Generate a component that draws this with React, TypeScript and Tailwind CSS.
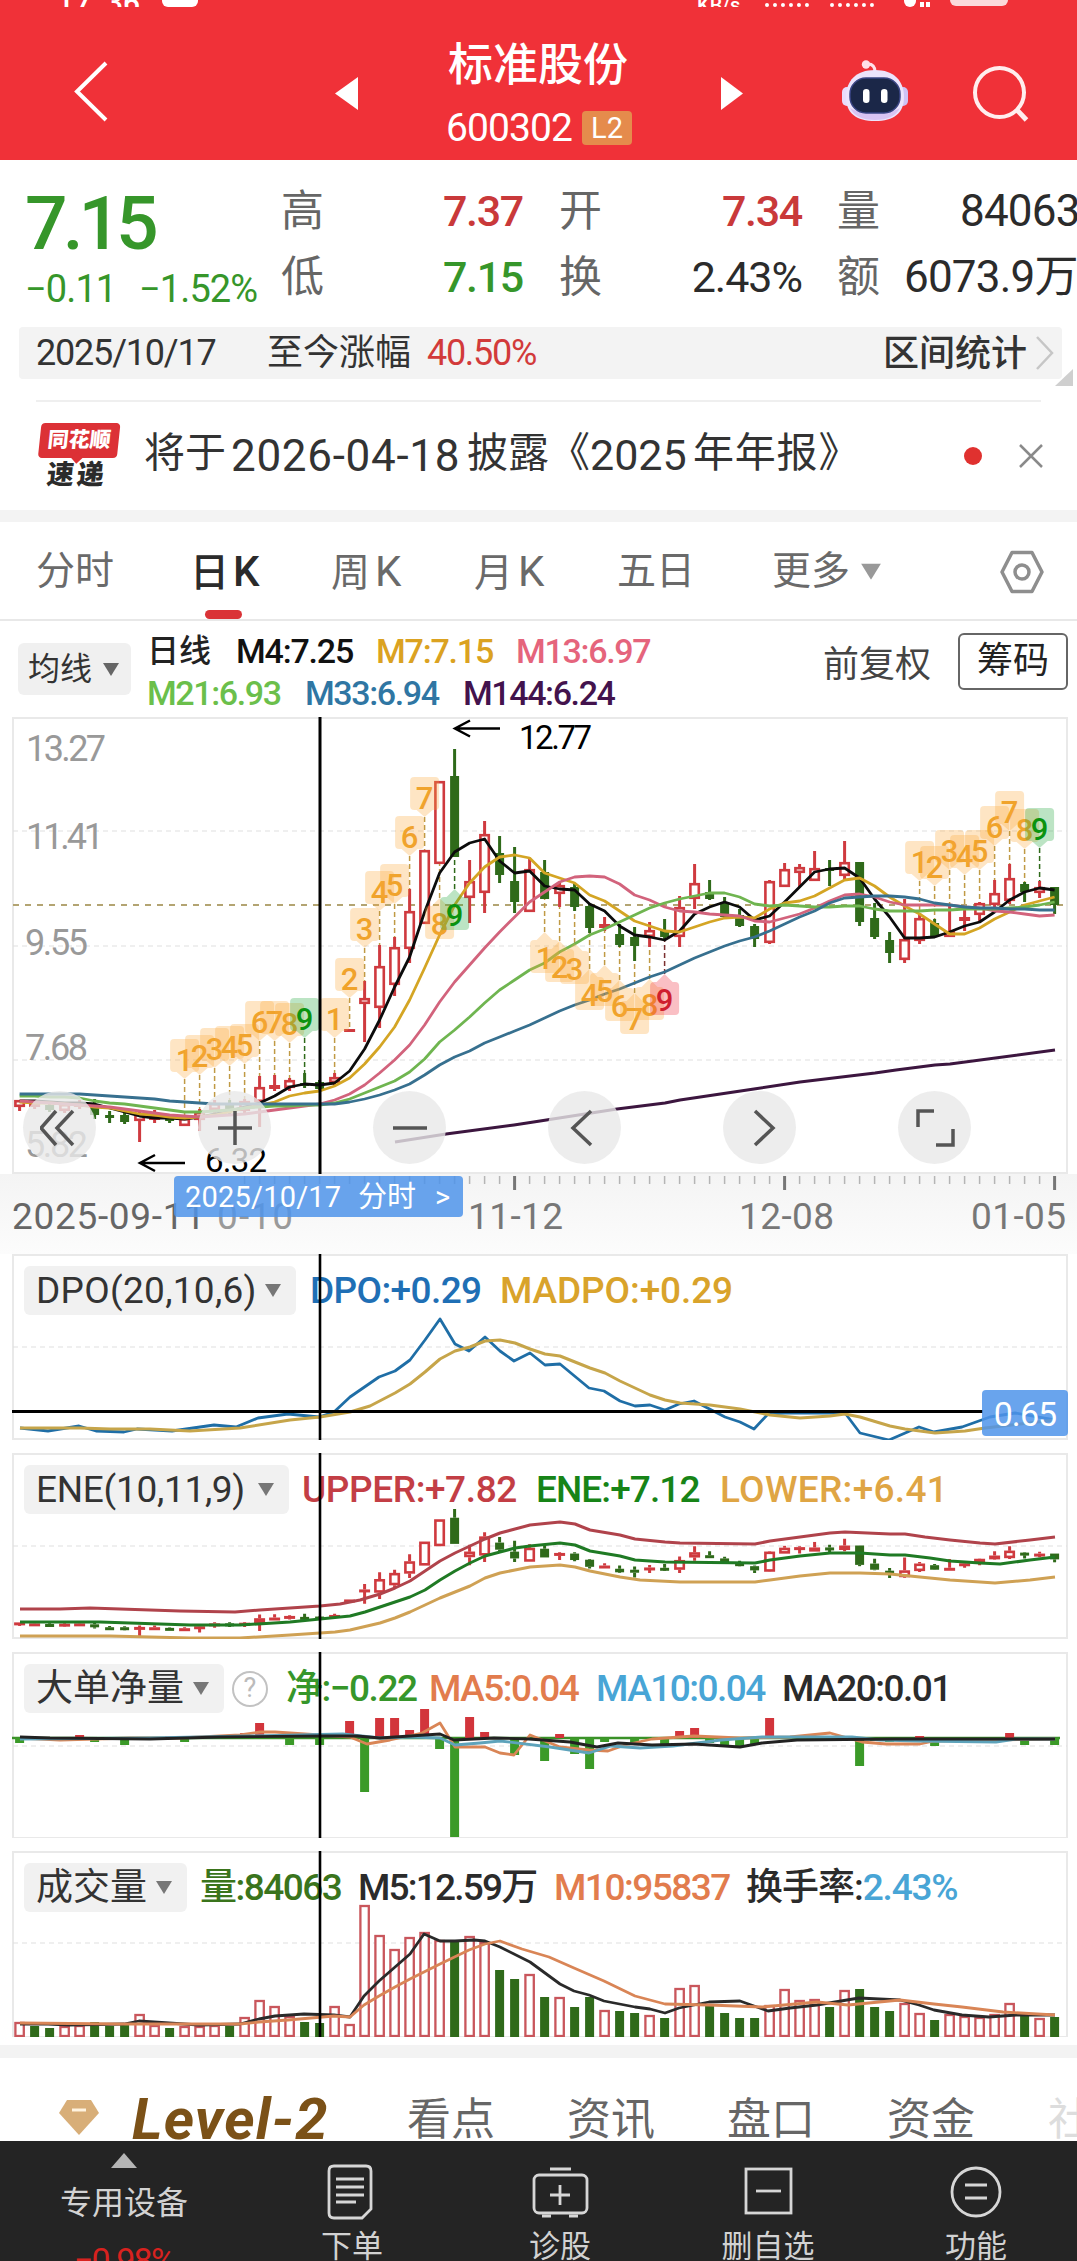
import type { ReactNode } from 'react';

const STEP = 15;
const X0 = 19.6;
const CROSS = 320;
const xAt = (i: number) => X0 + i * STEP;

const RED = '#cf3a3f';
const GREEN = '#2f6a1a';

// [color, high, bodyTop, bodyBottom, low]
type Candle = ['r' | 'g', number, number, number, number];

const candles: Candle[] = [
  ['r', 1100, 1100, 1107, 1111], ['r', 1102, 1103, 1107, 1109], ['g', 1103, 1105, 1110, 1112],
  ['r', 1102, 1104, 1111, 1113], ['r', 1100, 1103, 1107, 1109], ['g', 1099, 1106, 1115, 1119],
  ['g', 1111, 1115, 1118, 1123], ['g', 1112, 1115, 1122, 1124], ['r', 1110, 1114, 1121, 1142],
  ['r', 1110, 1115, 1120, 1123], ['g', 1115, 1117, 1121, 1123], ['r', 1115, 1118, 1126, 1126],
  ['r', 1109, 1112, 1120, 1131], ['r', 1100, 1103, 1110, 1117], ['g', 1100, 1103, 1109, 1114],
  ['r', 1099, 1101, 1111, 1114], ['r', 1076, 1087, 1102, 1127], ['r', 1075, 1085, 1089, 1091],
  ['r', 1078, 1080, 1088, 1091], ['g', 1073, 1083, 1086, 1088], ['g', 1080, 1082, 1089, 1092],
  ['r', 1073, 1077, 1083, 1085], ['r', 1029, 1029, 1032, 1032], ['r', 981, 998, 1004, 1042],
  ['r', 945, 966, 1008, 1028], ['r', 937, 947, 985, 996], ['r', 889, 911, 949, 963],
  ['r', 850, 850, 924, 924], ['r', 781, 781, 864, 864], ['g', 749, 776, 857, 857],
  ['r', 860, 881, 898, 923], ['r', 821, 834, 893, 913], ['g', 836, 853, 875, 883],
  ['g', 847, 881, 902, 913], ['r', 858, 869, 912, 912], ['g', 860, 872, 899, 899],
  ['r', 883, 885, 894, 907], ['g', 883, 887, 907, 911], ['g', 904, 906, 928, 933],
  ['r', 917, 924, 928, 931], ['g', 924, 934, 945, 947], ['g', 927, 937, 946, 961],
  ['r', 922, 930, 937, 947], ['g', 919, 931, 937, 940], ['r', 896, 907, 937, 947],
  ['r', 864, 883, 899, 909], ['g', 880, 892, 899, 900], ['g', 897, 902, 917, 918],
  ['g', 909, 915, 926, 927], ['g', 924, 926, 939, 947], ['r', 880, 881, 943, 944],
  ['r', 863, 869, 887, 887], ['r', 864, 867, 873, 887], ['r', 851, 868, 881, 881],
  ['g', 860, 868, 871, 886], ['r', 841, 862, 876, 880], ['g', 862, 862, 922, 926],
  ['g', 903, 918, 937, 939], ['g', 932, 940, 953, 963], ['r', 899, 939, 960, 963],
  ['r', 913, 918, 941, 944], ['g', 919, 923, 937, 938], ['r', 904, 931, 937, 937],
  ['r', 910, 917, 921, 931], ['r', 902, 903, 915, 923], ['r', 880, 893, 905, 907],
  ['r', 864, 878, 901, 904], ['g', 882, 884, 892, 902], ['r', 881, 887, 893, 898],
  ['g', 887, 887, 905, 914],
];

const ma4 = [
  1101, 1101, 1102, 1103, 1103, 1104, 1108, 1112, 1116, 1118, 1118, 1119, 1117, 1114, 1111, 1107, 1103, 1096, 1087,
  1084, 1085, 1083, 1071, 1049, 1020, 987, 957, 912, 873, 852, 843, 839, 861, 873, 871, 886, 889, 890, 904, 911, 926,
  935, 937, 940, 931, 914, 907, 902, 907, 920, 916, 902, 887, 872, 869, 868, 878, 899, 917, 938, 938, 937, 932, 926,
  922, 912, 900, 892, 888, 890,
];
const ma7 = [
  1102, 1103, 1103, 1104, 1105, 1107, 1108, 1111, 1114, 1115, 1117, 1118, 1117, 1115, 1112, 1108, 1105, 1102, 1096,
  1093, 1091, 1086, 1078, 1064, 1047, 1027, 1000, 968, 935, 905, 883, 867, 857, 855, 858, 873, 878, 883, 895, 901, 911,
  921, 926, 931, 932, 927, 922, 918, 917, 918, 909, 903, 901, 896, 888, 880, 878, 886, 897, 906, 914, 924, 934, 934,
  928, 919, 912, 905, 901, 897,
];
const ma13 = [
  1101, 1102, 1103, 1104, 1105, 1106, 1107, 1109, 1111, 1113, 1115, 1116, 1117, 1116, 1115, 1114, 1112, 1110, 1108,
  1106, 1104, 1100, 1094, 1085, 1073, 1060, 1045, 1025, 1002, 982, 965, 948, 932, 917, 902, 892, 882, 877, 876, 877,
  884, 895, 900, 907, 911, 912, 914, 915, 916, 921, 922, 918, 914, 908, 901, 895, 894, 897, 902, 905, 905, 905, 905,
  907, 908, 911, 912, 914, 916, 915,
];
const ma21 = [
  1096, 1096, 1097, 1097, 1098, 1101, 1103, 1104, 1106, 1108, 1110, 1112, 1112, 1111, 1110, 1108, 1107, 1106, 1106,
  1105, 1105, 1103, 1099, 1093, 1087, 1081, 1072, 1059, 1042, 1030, 1017, 1003, 990, 980, 970, 963, 952, 944, 935, 929,
  922, 915, 908, 903, 899, 896, 893, 893, 897, 904, 906, 905, 906, 907, 907, 906, 906, 909, 911, 911, 911, 910, 910,
  909, 909, 909, 908, 907, 905, 902,
];
const ma33 = [
  1094, 1094, 1094, 1094, 1094, 1095, 1096, 1097, 1098, 1099, 1101, 1102, 1103, 1104, 1104, 1104, 1104, 1104, 1104,
  1104, 1104, 1104, 1102, 1099, 1095, 1090, 1084, 1075, 1065, 1057, 1051, 1043, 1037, 1031, 1025, 1018, 1011, 1005,
  1000, 994, 989, 983, 977, 972, 965, 958, 952, 946, 941, 937, 931, 924, 917, 911, 903, 898, 897, 896, 896, 897, 899,
  903, 905, 907, 908, 908, 909, 909, 910, 910,
];

// [index, tip, label, kind, above]
type Tag = [number, number, number, 'o' | 'g' | 'r', boolean];
const tags: Tag[] = [
  [11, 1079, 1, 'o', true], [12, 1075, 2, 'o', true], [13, 1068, 3, 'o', true], [14, 1066, 4, 'o', true],
  [15, 1064, 5, 'o', true], [16, 1041, 6, 'o', true], [17, 1041, 7, 'o', true], [18, 1043, 8, 'o', true],
  [19, 1038, 9, 'g', true], [21, 1038, 1, 'o', true], [22, 998, 2, 'o', true], [23, 948, 3, 'o', true],
  [24, 911, 4, 'o', true], [25, 904, 5, 'o', true], [26, 856, 6, 'o', true], [27, 817, 7, 'o', true],
  [28, 898, 8, 'o', false], [29, 889, 9, 'g', false], [35, 932, 1, 'o', false], [36, 941, 2, 'o', false],
  [37, 943, 3, 'o', false], [38, 969, 4, 'o', false], [39, 965, 5, 'o', false], [40, 980, 6, 'o', false],
  [41, 993, 7, 'o', false], [42, 979, 8, 'o', false], [43, 974, 9, 'r', false], [60, 881, 1, 'o', true],
  [61, 886, 2, 'o', true], [62, 870, 3, 'o', true], [63, 875, 4, 'o', true], [64, 870, 5, 'o', true],
  [65, 846, 6, 'o', true], [66, 831, 7, 'o', true], [67, 849, 8, 'o', true], [68, 848, 9, 'g', true],
];
const tagFill = { o: '#fba93a', g: '#22a63a', r: '#ee2b3c' };
const tagText = { o: '#f0a32c', g: '#0b930f', r: '#cf1f2e' };

const netFlow: Record<number, number> = {
  0: -5, 4: 3, 5: -4, 7: -7, 10: 2, 11: -4, 15: 5, 16: 15, 18: -7, 20: -7, 22: 17, 23: -54, 24: 20, 25: 20, 26: 8,
  27: 29, 28: -11, 29: -99, 30: 21, 31: 6, 33: -17, 35: -23, 36: 4, 37: -16, 38: -31, 39: -4, 41: -5, 43: -9, 44: 7,
  45: 10, 46: -5, 47: -7, 48: -9, 49: -6, 50: 20, 56: -28, 57: -3, 58: -4, 60: 2, 61: -8, 66: 5, 67: -7, 69: -7,
};

const volume =
  '13r 11g 9g 9r 10r 15g 11g 13g 21r 10r 9g 9r 9r 10r 11g 18r 35r 29r 19r 15g 14g 29r 11r 130r 100r 86r 98r 103r 95r 97g 99r 93r 67g 58g 61r 40g 38r 30g 40g 25r 26g 24g 20r 19g 47r 50r 32g 24g 19g 19g 30r 46r 35r 36r 30g 45r 48g 30g 26g 32r 22r 17g 21r 19r 18r 21r 32r 21g 17r 20g'
    .split(' ')
    .map((s) => ({ h: parseInt(s), up: s.endsWith('r') }));

const seriesPath = (ys: number[]) => ys.map((y, i) => `${xAt(i).toFixed(1)},${y}`).join(' ');

const Line = ({ pts, color, w = 2.8 }: { pts: string; color: string; w?: number }) => (
  <polyline points={pts} fill="none" stroke={color} strokeWidth={w} strokeLinejoin="round" />
);

const Candles = ({ map = (y: number) => y }: { map?: (y: number) => number }) => (
  <g>
    {candles.map(([c, hi, top, bot, lo], i) => {
      const x = xAt(i);
      const [h, t, b, l] = [hi, top, bot, lo].map(map);
      const color = c === 'r' ? RED : GREEN;
      const hollow = c === 'r' && b - t > 5;
      return (
        <g key={i} stroke={color}>
          <path d={`M${x} ${h}V${t}M${x} ${b}V${l}`} strokeWidth={3} fill="none" />
          {hollow ? (
            <rect x={x - 4.2} y={t + 1.2} width={8.4} height={b - t - 2.4} fill="#fff" strokeWidth={2.6} />
          ) : (
            <rect x={x - (c === 'r' ? 5.5 : 4.5)} y={t} width={c === 'r' ? 11 : 9} height={Math.max(b - t, 3)} fill={color} stroke="none" />
          )}
        </g>
      );
    })}
  </g>
);

const Frame = ({ top, bottom, grid = [] }: { top: number; bottom: number; grid?: number[] }) => (
  <g fill="none">
    <rect x={13} y={top + 1} width={1054} height={bottom - top - 2} stroke="#e9e9e9" strokeWidth={2} />
    {grid.map((y) => (
      <path key={y} d={`M13 ${y}H1067`} stroke="#dfdfdf" strokeWidth={1.2} strokeDasharray="5 4" />
    ))}
  </g>
);

const Caret = ({ className = '' }: { className?: string }) => (
  <svg className={`shrink-0 ${className}`} width="18" height="13" viewBox="0 0 18 13">
    <path d="M1 0h16L9 13z" fill="currentColor" />
  </svg>
);

const Header = () => (
  <header className="h-[160px] bg-[#f03138] text-white overflow-hidden">
    <div className="h-[7px] overflow-hidden flex items-end pl-[57px] text-[30px] leading-[8px] font-medium">
      <span className="w-[105px] shrink-0">17&nbsp; 36</span>
      <span className="w-9 h-[7px] rounded-b-md bg-white"></span>
      <span className="ml-[499px] w-[68px] text-[20px] leading-[4px]">KB/s</span>
      <span className="w-[44px] border-b-4 border-dotted border-white"></span>
      <span className="ml-[21px] w-[44px] border-b-4 border-dotted border-white"></span>
      <span className="ml-[30px] w-[12px] h-[7px] rounded-b-full bg-white"></span>
      <span className="ml-[4px] w-[10px] h-[5px] border-x-4 border-white"></span>
      <span className="ml-[20px] w-[58px] h-[6px] mb-px rounded-b-md bg-[#fbd9da]"></span>
    </div>
    <div className="flex items-start pl-[72px] pt-[30px]">
      <svg width="40" height="92" viewBox="72 37 40 92" className="shrink-0">
        <path d="M106 63 77 91.500 106 120" fill="none" stroke="#fff" strokeWidth="4" />
      </svg>
      <svg width="26" height="92" viewBox="334 37 26 92" className="ml-[222px] shrink-0">
        <path d="M358 77v33L335 93.500z" fill="#fff" />
      </svg>
      <div className="ml-[78px] w-[206px] flex flex-col">
        <div className="pl-[10px] h-[58px] text-[45px] leading-[58px] font-medium whitespace-nowrap">标准股份</div>
        <div className="flex items-center h-9 pl-[8px] mt-[15px]">
          <span className="text-[39px] leading-9 tracking-[-0.900px] w-[136px]">600302</span>
          <span className="w-[50px] h-[34px] rounded bg-[#e58b4c] text-[29px] leading-[35px] text-center">L2</span>
        </div>
      </div>
      <svg width="26" height="92" viewBox="719 37 26 92" className="ml-[75px] shrink-0">
        <path d="M721 77v33l22-16.500z" fill="#fff" />
      </svg>
      <svg width="72" height="92" viewBox="839 37 72 92" className="ml-[94px] shrink-0">
        <path d="M875 72c0-6-3-8-7-8" fill="none" stroke="#ffdfe8" strokeWidth="3" />
        <circle cx="866" cy="64.500" r="4.200" fill="#ffdfe8" />
        <rect x="842" y="87" width="10" height="19" rx="5" fill="#e9dcfb" />
        <rect x="898" y="87" width="10" height="19" rx="5" fill="#cfc3f5" />
        <path d="M875 70c19 0 29 11 29 27s-10 24-29 24-29-8-29-24 10-27 29-27z" fill="#ece4fc" />
        <path d="M850 108c4 8 12 12 25 12s21-4 25-12c-8 6-42 6-50 0z" fill="#d9c4f3" />
        <rect x="850" y="78" width="50" height="35" rx="16" fill="#1b2748" stroke="#3a4584" strokeWidth="1.500" />
        <rect x="863" y="89" width="6.500" height="14" rx="3.200" fill="#fff" />
        <rect x="881" y="89" width="6.500" height="14" rx="3.200" fill="#fff" />
      </svg>
      <svg width="62" height="92" viewBox="970 37 62 92" className="ml-[59px] shrink-0">
        <circle cx="999.500" cy="92.500" r="24.500" fill="none" stroke="#ffeeee" strokeWidth="4" />
        <path d="M1016 109l10.500 11" stroke="#ffeeee" strokeWidth="5" />
      </svg>
    </div>
  </header>
);

const Stat = ({ label, value, className }: { label: string; value: string; className: string }) => (
  <div className="flex justify-between">
    <span className="text-[#666]">{label}</span>
    <span className={className}>{value}</span>
  </div>
);

const Quote = () => (
  <section className="h-[167px] flex overflow-hidden text-[43px] leading-[66px] whitespace-nowrap">
    <div className="w-[281px] shrink-0 text-[#36962a] pl-[25px] pt-[22px]">
      <div className="text-[75px] leading-[82px] font-medium tracking-[-5px]">7.15</div>
      <div className="text-[38px] leading-[50px] flex tracking-[-0.900px]">
        <span className="w-[114px]">−0.11</span>
        <span>−1.52%</span>
      </div>
    </div>
    <div className="w-[242px] shrink-0 pt-[18px]">
      <Stat label="高" value="7.37" className="text-[#c9393a] font-medium tracking-[-1.300px]" />
      <Stat label="低" value="7.15" className="text-[#36962a] font-medium tracking-[-1.300px]" />
    </div>
    <div className="w-[243px] ml-[36px] shrink-0 pt-[18px]">
      <Stat label="开" value="7.34" className="text-[#c9393a] font-medium tracking-[-1.300px]" />
      <Stat label="换" value="2.43%" className="text-[#2b2b2b] tracking-[-1px]" />
    </div>
    <div className="w-[242px] ml-[35px] shrink-0 pt-[18px] text-[#2b2b2b]">
      <div className="flex">
        <span className="text-[#666]">量</span>
        <span className="ml-[80px] text-[44px] tracking-[-0.800px]">84063</span>
      </div>
      <div className="flex">
        <span className="text-[#666]">额</span>
        <span className="ml-[24px] text-[44px] tracking-[-0.800px]">6073.9万</span>
      </div>
    </div>
  </section>
);

const RangeBar = () => (
  <div className="h-[73px] relative">
    <div className="ml-[19px] w-[1043px] h-[52px] rounded bg-[#f3f3f3] flex items-center pl-[17px] text-[36px] text-[#333] whitespace-nowrap">
      <span className="w-[231px] tracking-[-1.200px]">2025/10/17</span>
      <span className="w-[160px]">至今涨幅</span>
      <span className="text-[#d23a3a] tracking-[-1.300px]">40.50%</span>
      <span className="ml-auto pt-px font-medium">区间统计</span>
      <svg className="ml-[8px] mr-[7px]" width="20" height="36" viewBox="0 0 20 36">
        <path d="M2 2 17 18 2 34" fill="none" stroke="#c6c6c6" strokeWidth="2.500" />
      </svg>
    </div>
    <svg className="absolute right-[4px] top-[42px]" width="18" height="17" viewBox="0 0 18 17">
      <path d="M18 0v17H0z" fill="#cfcfcf" />
    </svg>
  </div>
);

const Notice = () => (
  <div className="h-[110px] mx-[36px] border-t-2 border-[#efefef] flex items-center whitespace-nowrap">
    <div className="w-[83px] shrink-0 flex flex-col items-center -skew-x-6">
      <div className="w-[79px] h-[35px] rounded bg-[#dc3136] text-white text-[21px] leading-[34px] font-black text-center relative">
        同花顺
        <span className="absolute left-[35px] top-[31px] size-2 rotate-45 bg-[#dc3136]"></span>
      </div>
      <div className="text-[27px] leading-[30px] mt-[2px] pl-[3px] font-black tracking-[3px] text-[#2b2b2b]">速递</div>
    </div>
    <div className="ml-[25px] text-[41px] text-[#333] flex">
      <span className="w-[87px]">将于</span>
      <span className="w-[236px] text-[44px] tracking-[0.700px]">2026-04-18</span>
      <span className="w-[82px]">披露</span>
      <span className="w-[41px]">《</span>
      <span className="w-[103px] text-[43px]">2025</span>
      <span className="tracking-[0.800px]">年年报》</span>
    </div>
    <span className="ml-auto size-[18px] rounded-full bg-[#e0312f]"></span>
    <svg className="ml-[37px] -mr-[2px]" width="24" height="24" viewBox="0 0 24 24">
      <path d="M1 1 23 23M23 1 1 23" stroke="#8a8a8a" strokeWidth="2.500" />
    </svg>
  </div>
);

const Tabs = () => (
  <nav className="h-[99px] border-b-2 border-[#e8e8e8] flex items-center pl-[36px] pt-[2px] text-[39px] text-[#6a6a6a] whitespace-nowrap">
    <span className="w-[154px]">分时</span>
    <span className="w-[141px] text-[#2b2b2b] font-medium relative">
      日<span className="ml-[4px] text-[42px]">K</span>
      <span className="absolute left-[15px] top-[70px] w-[37px] h-[9px] rounded-full bg-[#da3337]"></span>
    </span>
    <span className="w-[143px]">周<span className="ml-[5px] text-[42px]">K</span></span>
    <span className="w-[143px]">月<span className="ml-[5px] text-[42px]">K</span></span>
    <span className="w-[155px]">五日</span>
    <span className="w-[90px]">更多</span>
    <Caret className="text-[#999] scale-125" />
    <svg className="ml-[120px]" width="44" height="44" viewBox="0 0 44 44" fill="none" stroke="#8e8e8e" strokeWidth="3.500" strokeLinejoin="round">
      <path d="M12 2.500h20L42 22 32 41.500H12L2 22z" />
      <circle cx="22" cy="22" r="7" />
    </svg>
  </nav>
);

const MaLegend = () => (
  <div className="h-[96px] flex pl-[18px] text-[34px] whitespace-nowrap overflow-hidden">
    <div className="mt-[22px] w-[113px] h-[52px] rounded-md bg-[#f0f0f0] flex items-center pl-[10px] text-[32px] text-[#333]">
      均线<Caret className="ml-[10px] text-[#666]" />
    </div>
    <div className="ml-[16px] w-[676px] pt-[10px] font-medium">
      <div className="flex h-[41px] leading-[41px]">
        <span className="w-[89px] text-[32px] text-[#222]">日线</span>
        <span className="w-[140px] tracking-[-1.200px] text-[#111]">M4:7.25</span>
        <span className="w-[140px] tracking-[-1.200px] text-[#dba221]">M7:7.15</span>
        <span className="tracking-[-1.300px] text-[#e5647c]">M13:6.97</span>
      </div>
      <div className="flex h-[41px] leading-[43px] tracking-[-1.400px]">
        <span className="w-[158px] text-[#6bbf4b]">M21:6.93</span>
        <span className="w-[158px] text-[#2f76a3]">M33:6.94</span>
        <span className="text-[#43134d]">M144:6.24</span>
      </div>
    </div>
    <span className="mt-[24px] leading-[40px] text-[36px] text-[#444]">前复权</span>
    <span className="ml-[27px] mt-[12px] w-[110px] h-[57px] border-2 border-[#666] rounded-md text-[36px] leading-[53px] text-center text-[#222]">
      筹码
    </span>
  </div>
);

const RoundButton = ({ children }: { children: ReactNode }) => (
  <span className="size-[73px] shrink-0 rounded-full bg-[#e8e8e8]/80 flex items-center justify-center">
    <svg width="40" height="40" viewBox="-20 -20 40 40" fill="none" stroke="#555" strokeWidth="3.500">
      {children}
    </svg>
  </span>
);

const KChart = () => (
  <div className="h-[457px] relative">
    <svg className="block" width="1077" height="457" viewBox="0 717 1077 457">
      <Frame top={717} bottom={1174} grid={[831, 946, 1060]} />
      <path d="M13 905H1067" stroke="#b3a472" strokeWidth="1.800" strokeDasharray="6 6" />
      <g fill="#999" fontSize="36">
        <text x="26" y="761" textLength="80">13.27</text>
        <text x="26" y="849" textLength="78">11.41</text>
        <text x="25" y="955" textLength="63">9.55</text>
        <text x="25" y="1060" textLength="63">7.68</text>
        <text x="25" y="1157" textLength="63">5.82</text>
      </g>
      {tags.map(([i, tip, , kind, above]) => (
        <path
          key={i}
          d={`M${xAt(i)} ${tip}V${above ? candles[i][1] : candles[i][4]}`}
          stroke={kind === 'o' ? '#c09a45' : kind === 'g' ? '#2f6a1a' : '#7b3030'}
          strokeWidth="1.500"
          strokeDasharray="5 3"
        />
      ))}
      <Candles />
      <Line pts={seriesPath(ma4)} color="#0c0c0c" />
      <Line pts={seriesPath(ma7)} color="#d4a524" />
      <Line pts={seriesPath(ma13)} color="#d2637c" />
      <Line pts={seriesPath(ma21)} color="#6fb550" />
      <Line pts={seriesPath(ma33)} color="#37708f" />
      <Line
        pts="395,1142 446,1134 514,1125 540,1121 617,1109 665,1103 680,1100 754,1089 800,1082 875,1073 896,1070 935,1065 950,1064 1055,1050"
        color="#3c163f"
        w={3}
      />
      {tags.map(([i, tip, label, kind, above]) => {
        const x = xAt(i);
        const top = above ? tip - 40 : tip + 8;
        return (
          <g key={i}>
            <path
              d={
                above
                  ? `M${x - 10.5} ${top}h21a4 4 0 0 1 4 4v25a4 4 0 0 1-4 4h-2.500l-8 7-8-7h-2.500a4 4 0 0 1-4-4v-25a4 4 0 0 1 4-4z`
                  : `M${x - 10.5} ${top}h2.500l8-8 8 8h2.500a4 4 0 0 1 4 4v25a4 4 0 0 1-4 4h-21a4 4 0 0 1-4-4v-25a4 4 0 0 1 4-4z`
              }
              fill={tagFill[kind]}
              fillOpacity="0.300"
            />
            <text x={x} y={above ? tip - 8 : tip + 37} textAnchor="middle" fontSize="31" fontWeight="500" fill={tagText[kind]}>
              {label}
            </text>
          </g>
        );
      })}
      <g fill="none" stroke="#000" strokeWidth="2.500">
        <path d="M500 728.500H455M470 720.500l-15 8 15 8" />
        <path d="M185 1163H140M155 1155l-15 8 15 8" />
      </g>
      <g fill="#000" fontSize="33">
        <text x="519" y="749" textLength="73">12.77</text>
        <text x="205" y="1172" textLength="62">6.32</text>
      </g>
      <path d={`M${CROSS} 717V1174`} stroke="#000" strokeWidth="3" />
    </svg>
    <div className="absolute left-[23px] top-[374px] flex gap-[102px]">
      <RoundButton><path d="M-4 -17-19 0-4 17M13 -17-3 0 13 17" /></RoundButton>
      <RoundButton><path d="M-17 0h34M0 -17v34" /></RoundButton>
      <RoundButton><path d="M-17 0h34" /></RoundButton>
      <RoundButton><path d="M6 -17-12 0 6 17" /></RoundButton>
      <RoundButton><path d="M-5 -17 13 0-5 17" /></RoundButton>
      <RoundButton><path d="M-17 -1v-16h16M1 17h17v-16" /></RoundButton>
    </div>
  </div>
);

const TimeAxis = () => (
  <div className="h-[80px] relative bg-gradient-to-b from-[#f4f4f4] to-[#fcfcfc]">
    <svg className="block" width="1077" height="80" viewBox="0 1174 1077 80">
      {Array.from({ length: 55 }).map((_, k) => {
        const i = k + 15;
        const major = i === 33 || i === 51 || i === 69;
        return (
          <path key={i} d={`M${xAt(i)} 1176V${major ? 1190 : 1184}`} stroke={major ? '#777' : '#b5b5b5'} strokeWidth={major ? 3 : 1.5} />
        );
      })}
      <g fill="#777" fontSize="37">
        <text x="12" y="1229" textLength="193" fill="#666">2025-09-11</text>
        <text x="217" y="1229" textLength="76" fill="#9a9a9a">0-10</text>
        <text x="468" y="1229" textLength="95">11-12</text>
        <text x="739" y="1229" textLength="95">12-08</text>
        <text x="971" y="1229" textLength="95">01-05</text>
      </g>
    </svg>
    <div className="absolute left-[174px] top-[2px] w-[289px] h-[41px] rounded-sm bg-[#4f94ea]/85 text-white text-[29px] leading-[43px] flex pl-[11px] whitespace-nowrap">
      <span className="w-[173px] tracking-[0.200px]">2025/10/17</span>
      <span className="w-[77px]">分时</span>
      <span>&gt;</span>
    </div>
  </div>
);

type PanelProps = {
  top: number;
  bottom: number;
  grid: number;
  title: string;
  titleClass: string;
  legend: ReactNode;
  children: ReactNode;
  help?: boolean;
};

const Panel = ({ top, bottom, grid, title, titleClass, legend, children, help }: PanelProps) => (
  <div className="h-[185px] mb-[14px] relative">
    <svg className="block" width="1077" height="186" viewBox={`0 ${top} 1077 186`}>
      <Frame top={top} bottom={bottom} grid={[grid]} />
      {children}
    </svg>
    <div className="absolute left-[24px] top-[12px] h-[49px] flex items-center text-[37px] leading-[49px] whitespace-nowrap">
      <div className={`h-[49px] rounded-md bg-[#f1f1f1] text-[#333] flex items-center justify-between pl-[12px] pr-[14px] ${titleClass}`}>
        <span>{title}</span>
        <Caret className="text-[#777]" />
      </div>
      {help && (
        <span className="ml-[8px] size-[36px] rounded-full border-[2.5px] border-[#c2c2c2] text-[#bbb] text-[27px] leading-[31px] text-center">?</span>
      )}
      {legend}
    </div>
    <svg className="absolute left-0 top-0" width="1077" height="186" viewBox={`0 ${top} 1077 186`}>
      <path d={`M${CROSS} ${top}V${bottom}`} stroke="#000" strokeWidth="2.600" />
    </svg>
  </div>
);

const DpoPanel = () => (
  <div className="relative">
    <Panel
      top={1254}
      bottom={1440}
      grid={1347}
      title="DPO(20,10,6)"
      titleClass="w-[272px] tracking-[0.300px]"
      legend={
        <div className="ml-[14px] flex font-medium">
          <span className="w-[190px] text-[#1f6fb5] tracking-[-0.600px]">DPO:+0.29</span>
          <span className="text-[#d9a32b] tracking-[-0.100px]">MADPO:+0.29</span>
        </div>
      }
    >
      <Line
        color="#1f6ea6"
        pts="20,1428 48,1431 79,1426 96,1431 124,1432 137,1429 172,1431 214,1425 236,1427 258,1418 288,1414 319,1417 334,1412 350,1397 379,1377 395,1371 410,1360 425,1340 440,1319 455,1344 469,1351 485,1337 500,1351 514,1361 530,1353 545,1365 560,1364 589,1388 604,1391 620,1401 635,1406 650,1405 665,1410 679,1404 694,1401 725,1417 740,1422 754,1429 768,1414 785,1413 845,1413 860,1433 889,1440 919,1427 934,1432 962,1427 990,1417 1015,1413 1055,1420"
      />
      <Line
        color="#c6a54a"
        w={3}
        pts="20,1428 80,1428 110,1429 150,1429 190,1431 240,1428 290,1420 320,1417 350,1412 370,1406 395,1393 410,1384 425,1372 440,1359 455,1351 470,1347 485,1341 500,1340 515,1343 530,1349 545,1354 560,1356 575,1362 590,1368 605,1373 620,1381 650,1395 665,1400 680,1403 710,1405 740,1409 770,1415 800,1418 830,1416 845,1414 860,1417 890,1426 905,1429 935,1433 965,1431 985,1428 1055,1420"
      />
      <path d="M12 1411.500H983" stroke="#000" strokeWidth="3" />
    </Panel>
    <div className="absolute left-[982px] top-[136px] w-[86px] h-[46px] rounded-sm bg-[#4f94ea]/85 text-white text-[34px] leading-[49px] text-center tracking-[-0.900px]">
      0.65
    </div>
  </div>
);

const enePts = '20,1609 60,1609 90,1608 120,1609 180,1611 235,1612 260,1610 290,1608 320,1606 340,1604 360,1600 380,1594 395,1588 410,1581 425,1571 440,1561 455,1553 470,1546 485,1539 500,1533 515,1529 530,1525 560,1522 575,1524 590,1530 620,1535 635,1539 665,1542 680,1543 755,1544 770,1541 800,1537 830,1533 845,1532 890,1534 905,1534 925,1537 950,1540 980,1543 995,1544 1030,1540 1055,1537';
const eneMid = '20,1622 100,1622 190,1625 240,1625 290,1622 320,1619 350,1616 365,1612 380,1607 395,1602 410,1597 425,1590 440,1580 455,1571 470,1563 485,1556 500,1552 515,1548 530,1546 560,1543 575,1545 590,1551 620,1556 635,1560 665,1562 755,1563 770,1560 800,1556 830,1553 860,1553 890,1555 905,1555 930,1558 950,1561 980,1563 1000,1564 1030,1560 1055,1557';
const eneLow = '20,1636 110,1636 190,1638 240,1638 290,1635 335,1632 350,1630 380,1623 395,1618 410,1612 425,1605 440,1598 455,1592 470,1586 485,1578 500,1573 515,1570 530,1567 560,1565 575,1567 590,1571 620,1577 640,1580 680,1582 755,1582 770,1580 800,1576 830,1573 860,1573 890,1574 920,1577 950,1580 995,1583 1030,1580 1055,1577';

const EnePanel = () => (
  <Panel
    top={1453}
    bottom={1639}
    grid={1546}
    title="ENE(10,11,9)"
    titleClass="w-[265px] tracking-[-0.300px]"
    legend={
      <div className="ml-[13px] flex font-medium">
        <span className="w-[234px] text-[#c33e45] tracking-[-0.400px]">UPPER:+7.82</span>
        <span className="w-[184px] text-[#178417] tracking-[-0.900px]">ENE:+7.12</span>
        <span className="text-[#dfa544] tracking-[0.300px]">LOWER:+6.41</span>
      </div>
    }
  >
    <Candles map={(y) => 1509 + (y - 749) * 0.323} />
    <Line pts={enePts} color="#b0434b" w={3} />
    <Line pts={eneMid} color="#1f7a24" w={3} />
    <Line pts={eneLow} color="#cfa154" w={3} />
  </Panel>
);

const NetFlowPanel = () => (
  <Panel
    top={1652}
    bottom={1839}
    grid={1746}
    title="大单净量"
    titleClass="w-[200px]"
    help
    legend={
      <div className="ml-[18px] flex font-medium tracking-[-1.500px]">
        <span className="w-[143px] text-[#36962a]">净:−0.22</span>
        <span className="w-[167px] text-[#e27c4d]">MA5:0.04</span>
        <span className="w-[186px] text-[#48a5d6]">MA10:0.04</span>
        <span className="text-[#2b2b2b]">MA20:0.01</span>
      </div>
    }
  >
    <path d="M12 1738H1060" stroke="#3a9128" strokeWidth="2.500" />
    {Object.entries(netFlow).map(([k, v]) => (
      <rect
        key={k}
        x={xAt(Number(k)) - 4.5}
        y={v > 0 ? 1738 - v : 1738}
        width="9"
        height={Math.abs(v)}
        fill={v > 0 ? '#d2353b' : '#3b9a28'}
      />
    ))}
    <Line
      color="#d98556"
      pts="20,1738 60,1740 130,1738 180,1738 240,1735 260,1732 275,1732 305,1734 350,1737 367,1744 390,1740 422,1733 440,1723 455,1747 485,1747 500,1753 514,1755 530,1735 560,1747 589,1750 608,1751 625,1745 652,1739 694,1736 740,1738 790,1737 830,1733 862,1742 886,1744 920,1744 934,1741 1055,1739"
    />
    <Line
      color="#5ea3bb"
      pts="20,1739 150,1738 250,1736 343,1734 380,1738 412,1737 440,1738 455,1745 480,1743 500,1741 550,1747 589,1753 611,1746 640,1748 673,1746 721,1740 762,1737 852,1737 880,1740 920,1741 996,1742 1016,1739 1055,1739"
    />
    <Line
      color="#222"
      pts="20,1737 50,1738 150,1739 220,1737 320,1736 357,1736 380,1738 440,1734 454,1740 494,1738 529,1739 570,1742 597,1747 618,1743 652,1745 694,1744 740,1747 762,1743 797,1740 893,1739 980,1739 1055,1739"
    />
  </Panel>
);

const VolumePanel = () => (
  <Panel
    top={1852}
    bottom={2039}
    grid={1944}
    title="成交量"
    titleClass="w-[163px]"
    legend={
      <div className="ml-[13px] flex font-medium tracking-[-1.500px]">
        <span className="w-[158px] text-[#3a741c]">量:84063</span>
        <span className="w-[196px] text-[#2b2b2b] tracking-[-1.800px]">M5:12.59万</span>
        <span className="w-[192px] text-[#e27c4d]">M10:95837</span>
        <span className="text-[#2b2b2b] tracking-[-1px]">换手率:</span>
        <span className="text-[#48a5d6] tracking-[-1.200px]">2.43%</span>
      </div>
    }
  >
    {volume.map(({ h, up }, i) =>
      up ? (
        <rect key={i} x={xAt(i) - 4.2} y={2037 - h} width="8.400" height={h} fill="#fff" stroke="#c9565c" strokeWidth="2.300" />
      ) : (
        <rect key={i} x={xAt(i) - 4.5} y={2038 - h} width="9" height={h} fill="#2f6a1a" />
      )
    )}
    <Line
      color="#2a2a2a"
      pts="20,2025 48,2025 69,2026 124,2025 139,2022 169,2024 199,2026 240,2025 259,2020 275,2017 304,2015 334,2016 350,2018 364,1997 379,1982 410,1955 424,1935 440,1942 455,1942 474,1941 485,1942 500,1948 530,1963 560,1985 574,1992 589,1996 604,2002 635,2008 650,2010 665,2014 679,2009 709,2003 740,2002 754,2007 768,2012 790,2009 817,2006 859,1999 900,2001 919,2006 934,2011 962,2016 989,2018 1016,2016 1055,2016"
    />
    <Line
      color="#d98556"
      pts="20,2024 120,2025 240,2025 259,2023 288,2021 334,2017 350,2018 364,2006 379,1997 395,1988 410,1980 440,1965 469,1951 485,1945 500,1942 522,1950 549,1958 574,1969 604,1982 635,1997 665,2005 709,2006 762,2008 817,2003 848,2006 900,2001 934,2005 962,2008 1003,2013 1055,2016"
    />
  </Panel>
);

const SectionTabs = () => (
  <nav className="h-[83px] flex items-center overflow-hidden whitespace-nowrap pl-[58px] pt-[2px] text-[44px] text-[#666]">
    <svg width="42" height="38" viewBox="0 0 42 38" className="mt-[38px] self-start shrink-0">
      <path d="M9 2h24l8 13-20 22L1 15z" fill="#d8ae78" />
      <path d="M14 12h14" stroke="#fff3df" strokeWidth="3" />
    </svg>
    <span className="ml-[32px] mt-[36px] w-[275px] shrink-0 text-[58px] leading-[56px] font-bold italic text-[#7b5117] tracking-[1.200px]">
      Level-2
    </span>
    <span className="mt-[38px] w-[160px] shrink-0">看点</span>
    <span className="mt-[38px] w-[160px] shrink-0">资讯</span>
    <span className="mt-[38px] w-[160px] shrink-0">盘口</span>
    <span className="mt-[38px] w-[161px] shrink-0">资金</span>
    <span className="mt-[38px] shrink-0 text-[#ddd]">社</span>
  </nav>
);

const BarItem = ({ label, className, children }: { label: string; className: string; children: ReactNode }) => (
  <div className={`flex flex-col items-center shrink-0 ${className}`}>
    <svg className="mt-[20px] shrink-0" width="60" height="60" viewBox="0 0 60 60" fill="none" stroke="#d6d6d6" strokeWidth="2.800">
      {children}
    </svg>
    <span className="text-[31px] leading-[40px] mt-[6px]">{label}</span>
  </div>
);

const BottomBar = () => (
  <footer className="h-[120px] bg-[#242424] text-[#d2d2d2] flex overflow-hidden whitespace-nowrap">
    <div className="w-[248px] shrink-0 flex flex-col items-center">
      <svg className="mt-[12px] shrink-0" width="26" height="15" viewBox="0 0 26 15">
        <path d="M13 0l13 15H0z" fill="#b5b5b5" />
      </svg>
      <span className="text-[32px] leading-[40px] mt-[15px] shrink-0">专用设备</span>
      <span className="text-[34px] leading-[40px] mt-[17px] shrink-0 text-[#d8221f] tracking-[-1.700px]">−0.98%</span>
    </div>
    <BarItem label="下单" className="w-[208px]">
      <path d="M12 5h32q5 0 5 5v38l-9 9H12q-5 0-5-5V10q0-5 5-5z" />
      <path d="M14 18h28M14 26h28M14 34h28M14 41h20" />
    </BarItem>
    <BarItem label="诊股" className="w-[208px]">
      <rect x="4" y="14" width="53" height="38" rx="5" />
      <path d="M20 8h21M12 55h9M39 55h9M30 24v20M20 34h20" />
    </BarItem>
    <BarItem label="删自选" className="w-[208px]">
      <rect x="8" y="8" width="45" height="44" />
      <path d="M18 30h25" />
    </BarItem>
    <BarItem label="功能" className="w-[208px]">
      <circle cx="30" cy="31" r="24" />
      <path d="M19 24h22M19 37h22" />
    </BarItem>
  </footer>
);

export default function App() {
  return (
    <div className="w-[1077px] h-[2261px] overflow-hidden bg-white font-[Roboto,'Noto_Sans_CJK_SC',sans-serif]">
      <Header />
      <Quote />
      <RangeBar />
      <Notice />
      <div className="h-[12px] bg-[#f3f3f3]"></div>
      <Tabs />
      <MaLegend />
      <KChart />
      <TimeAxis />
      <DpoPanel />
      <EnePanel />
      <NetFlowPanel />
      <VolumePanel />
      <div className="h-[13px] -mt-[5px] bg-[#f3f3f3]"></div>
      <SectionTabs />
      <BottomBar />
    </div>
  );
}
